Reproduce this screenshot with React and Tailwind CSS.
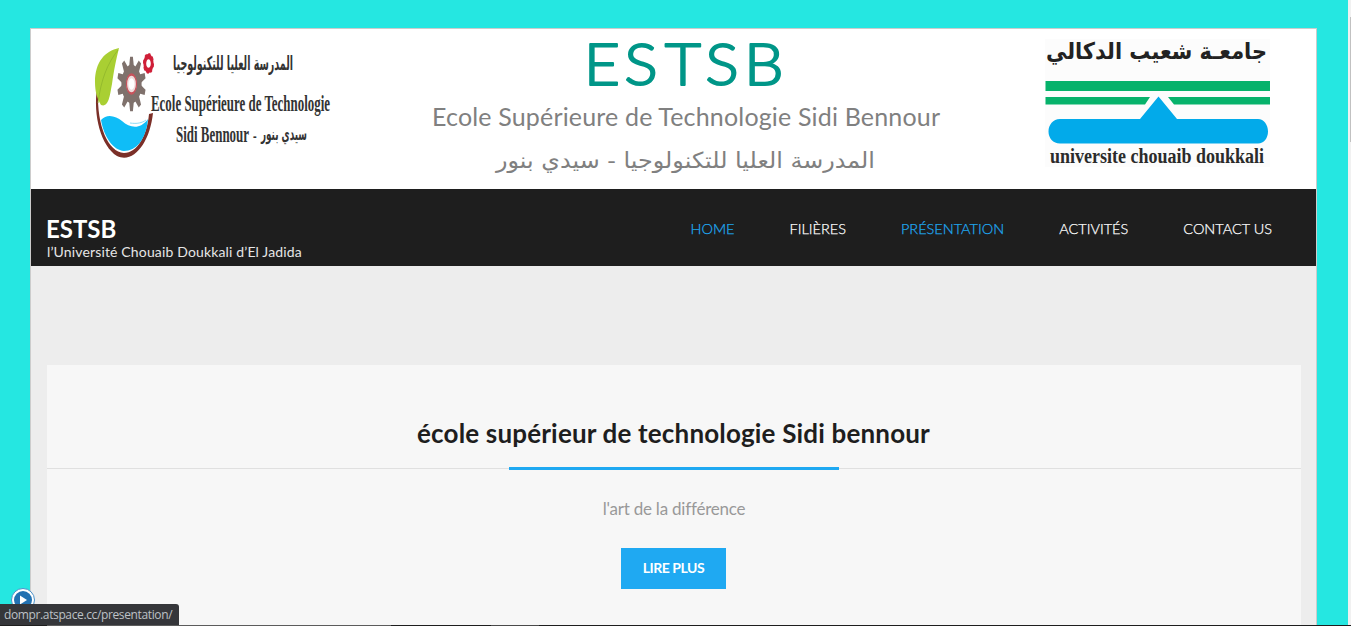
const NAV = [
  { label: "HOME", active: true },
  { label: "FILIÈRES" },
  { label: "PRÉSENTATION", active: true },
  { label: "ACTIVITÉS" },
  { label: "CONTACT US" },
];

const TEETH = [0, 36, 72, 108, 144, 180, 216, 252, 288, 324];

function SchoolLogo() {
  return (
    <svg className="h-[160px] w-[260px]" viewBox="80 29 260 160" fill="none">
      <path d="M97 88C93 116 101 146 117 156C134 164 150 142 153 113L149 114C147 136 137 153 124 153C108 152 97 126 98 92Z" fill="#7b2f28" />
      <path d="M119 48C105 51 95 62 95 82C95 92 97 98 101 105C109 108 110 94 112 84C114 70 116 60 119 48Z" fill="#a9cf33" />
      <path d="M118 50C107 64 101 80 98 103" stroke="#8fb52c" strokeWidth="0.8" />
      <path d="M101 120C107 113 116 116 122 121C130 128 140 130 148 119C146 140 136 151 124 151C113 150 104 137 101 120Z" fill="#0fbdf7" />
      <path d="M130 123C137 124 142 123 146 120" stroke="#8ddcf5" strokeWidth="1" />
      <g transform="translate(131.5 84) scale(1 1.9)">
        {TEETH.map((a) => (
          <path key={a} d="M-2.400 -9L-1.400 -14.300H1.400L2.400 -9Z" fill="#7f716c" transform={`rotate(${a})`} />
        ))}
        <circle r="7.6" stroke="#7f716c" strokeWidth="5" />
        <circle r="5" stroke="#c8525b" strokeWidth="1.2" fill="#eedcdc" />
        <circle r="3" fill="#fff" />
      </g>
      <g transform="translate(148.5 63.500) scale(1 1.9)">
        <circle r="3.7" stroke="#cf1f38" strokeWidth="2.8" />
        <circle r="5" stroke="#cf1f38" strokeWidth="1" strokeDasharray="2 1.9" />
      </g>
      <g className="fill-[#333333] font-bold">
        <text transform="translate(173 70) scale(1 1.75)" textLength="120" lengthAdjust="spacingAndGlyphs" className="text-[11px] [font-family:'DejaVu_Sans',sans-serif]">المدرسة العليا للتكنولوجيا</text>
        <g className="[font-family:'Liberation_Serif',serif]">
          <text transform="translate(151 111) scale(1 1.8)" textLength="179" lengthAdjust="spacingAndGlyphs" className="text-[13px]">Ecole Supérieure de Technologie</text>
          <text transform="translate(176 142) scale(1 1.8)" textLength="73" lengthAdjust="spacingAndGlyphs" className="text-[13px]">Sidi Bennour</text>
          <text transform="translate(253 142) scale(1 1.8)" className="text-[11px]">-</text>
        </g>
        <text transform="translate(261 140) scale(1 1.75)" textLength="46" lengthAdjust="spacingAndGlyphs" className="text-[10px] [font-family:'DejaVu_Sans',sans-serif]">سيدي بنور</text>
      </g>
    </svg>
  );
}

function BannerTitle() {
  return (
    <svg className="h-[160px] w-[540px]" viewBox="415 29 540 160">
      <text transform="scale(1.08 1)" x="540.6 578 615.6 653 688.8" y="85.200" strokeWidth="2" strokeLinejoin="round" className="fill-[#009688] stroke-[#009688] text-[58px] font-light [font-family:Lato,sans-serif]">ESTSB</text>
      <text x="432" y="126" textLength="508" className="fill-[#808080] text-[25px] [font-family:Lato,sans-serif]">Ecole Supérieure de Technologie Sidi Bennour</text>
      <text transform="translate(496 168) scale(1 1.1)" textLength="379" lengthAdjust="spacingAndGlyphs" className="fill-[#808080] text-[20px] [font-family:'DejaVu_Sans',sans-serif]">المدرسة العليا للتكنولوجيا - سيدي بنور</text>
    </svg>
  );
}

function UniversityLogo() {
  return (
    <svg className="h-[160px] w-[240px]" viewBox="1040 29 240 160">
      <rect x="1045" y="39" width="225" height="128" fill="#fcfcfc" />
      <text transform="translate(1046 59) scale(1 1.15)" textLength="221" lengthAdjust="spacingAndGlyphs" className="fill-[#222222] text-[20px] font-bold [font-family:'DejaVu_Sans',sans-serif]">جامعـة شعيب الدكالي</text>
      <path d="M1045.500 81H1270V91H1045.500Z M1045.500 97H1150L1145 104.500H1045.500Z M1168 97H1270V104.500H1174Z" fill="#06b26b" />
      <path d="M1158.500 96.500L1177 119H1258C1264 119 1268 125 1268 131.500C1268 138 1264 143.500 1258 143.500H1060C1053 143.500 1048.500 138 1048.500 131.500C1048.500 125 1053 119 1060 119H1140Z" fill="#02aaea" />
      <text transform="translate(1050 162.500) scale(1 1.2)" textLength="214" lengthAdjust="spacingAndGlyphs" className="fill-[#2b2b2b] text-[17px] font-bold [font-family:'Liberation_Serif',serif]">universite chouaib doukkali</text>
    </svg>
  );
}

export default function App() {
  return (
    <div className="relative flex h-[626px] w-full overflow-hidden bg-[#25e7e1] [font-family:Lato,sans-serif]">
      <div className="flex min-w-0 flex-1 flex-col pt-7 pr-[31px] pl-[30px]">
        <div className="flex flex-1 flex-col border-x border-t border-[#cccccc] bg-[#ededed]">
          <header>
            <div className="flex h-[160px] bg-white pl-[49px]">
              <SchoolLogo />
              <div className="ml-[75px]"><BannerTitle /></div>
              <div className="ml-[85px]"><UniversityLogo /></div>
            </div>
            <div className="flex h-[77px] justify-between bg-[#1e1e1e] pr-[44px] pl-[15px]">
              <div className="pt-[25px] text-white">
                <h1 className="text-[24px] leading-[30px] font-bold">ESTSB</h1>
                <p className="pl-px text-[14px] leading-[16px] tracking-[0.15px] text-[#e6e6e6]">l’Université Chouaib Doukkali d’El Jadida</p>
              </div>
              <nav className="flex gap-[55px] pt-[30px] text-[14.5px] leading-5 font-light [-webkit-text-stroke:0.25px]">
                {NAV.map((item) => (
                  <a key={item.label} className={item.active ? "text-[#1fa9f2]" : "text-white"}>{item.label}</a>
                ))}
              </nav>
            </div>
          </header>
          <main className="mt-[99px] mr-[15px] ml-4 flex flex-1 flex-col items-center bg-[#f7f7f7] pt-[49px]">
            <h2 className="mr-px text-[26px] leading-[38px] font-bold tracking-[0.17px] text-[#1e1e1e]">école supérieur de technologie Sidi bennour</h2>
            <div className="mt-[15px] flex h-[3px] w-full items-center justify-center">
              <div className="h-px flex-1 bg-[#e0e0e0]" />
              <div className="h-[3px] w-[330px] bg-[#1fa9f2]" />
              <div className="h-px flex-1 bg-[#e0e0e0]" />
            </div>
            <p className="mt-[26px] text-[17px] leading-[26px] tracking-[-0.22px] text-[#999999]">l'art de la différence</p>
            <button className="mt-[26px] mr-px h-[41px] w-[105px] bg-[#1fa9f2] pb-0.5 text-[14px] font-bold tracking-[-0.45px] text-white">LIRE PLUS</button>
          </main>
        </div>
      </div>
      <div className="flex w-[3px] justify-end bg-[#f1f1f1] pt-[17px]">
        <div className="h-[125px] w-px bg-[#c1c1c1]" />
      </div>
      <div className="absolute bottom-0 left-0 flex h-px w-full bg-[#1e1e1e]">
        <div className="ml-[47px] w-[344px] bg-[#5c5c5c]" />
        <div className="ml-[100px] w-[48px] bg-[#4a4a4a]" />
      </div>
      <svg className="absolute top-[588px] left-[11px] size-6" viewBox="0 0 24 24">
        <circle cx="12" cy="12" r="11.500" fill="#fff" stroke="#4a90c8" />
        <circle cx="12" cy="12" r="9" fill="#2271b1" />
        <path d="M9 7.500L16 12L9 16.500Z" fill="#fff" />
      </svg>
      <div className="absolute bottom-[1px] left-0 h-[21px] w-[179px] rounded-tr-[3px] bg-[#35363a] pl-1 text-[12px] leading-[21px] tracking-[-0.37px] whitespace-nowrap text-[#bdc1c6] [font-family:'Open_Sans',sans-serif]">dompr.atspace.cc/presentation/</div>
    </div>
  );
}
